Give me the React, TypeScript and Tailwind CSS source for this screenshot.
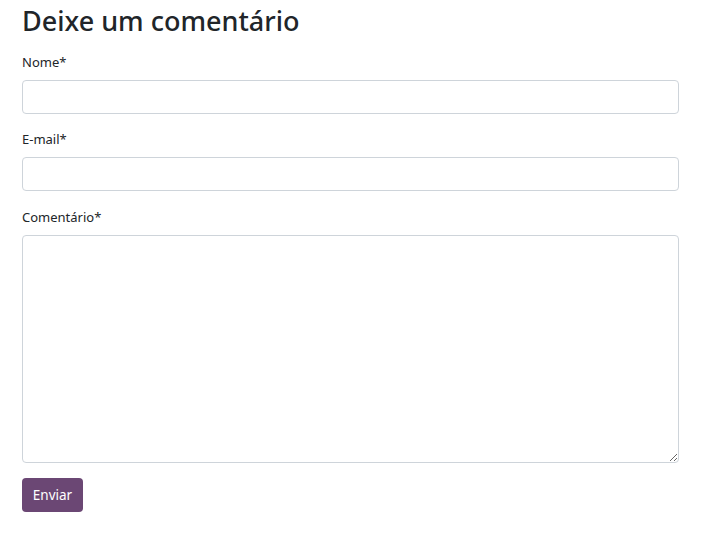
export default function App() {
  return (
    <div className="min-h-screen bg-white px-[22px] text-[#212529] font-['Noto_Sans',sans-serif]">
      <h2 className="pt-[2px] text-[27px] font-medium leading-[38px]">Deixe um comentário</h2>
      <form className="mt-[12px] flex flex-col" onSubmit={(e) => e.preventDefault()}>
        <label className="mb-[8px] block text-[13px] leading-[20px]">Nome*</label>
        <input type="text" className="h-[34px] w-[657px] rounded-[4px] border border-[#ced4da] px-3 outline-none" />
        <label className="mb-[8px] mt-[15px] block text-[13px] leading-[20px]">E-mail*</label>
        <input type="email" className="h-[34px] w-[657px] rounded-[4px] border border-[#ced4da] px-3 outline-none" />
        <label className="mb-[8px] mt-[16px] block text-[13px] leading-[20px]">Comentário*</label>
        <textarea className="h-[228px] w-[657px] rounded-[4px] border border-[#ced4da] px-3 py-2 outline-none" />
        <div className="mt-[15px]">
          <button type="submit" className="h-[34px] w-[61px] rounded-[4px] bg-[#6b4774] text-[13.5px] text-white">
            Enviar
          </button>
        </div>
      </form>
    </div>
  );
}
